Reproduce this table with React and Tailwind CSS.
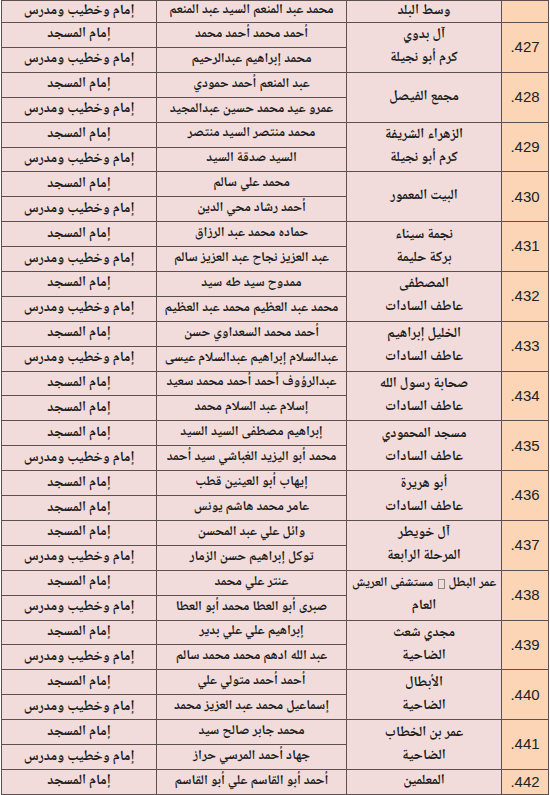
import React from 'react';

const IMAM = 'إمام المسجد';
const KHATIB = 'إمام وخطيب ومدرس';

// each record: number, mosque lines, two people [name, role]
const rows = [
  { no: '427', mosque: ['آل بدوي', 'كرم أبو نجيلة'], people: [['أحمد محمد أحمد محمد', IMAM], ['محمد إبراهيم عبدالرحيم', KHATIB]] },
  { no: '428', mosque: ['مجمع الفيصل'], people: [['عبد المنعم أحمد حمودي', IMAM], ['عمرو عيد محمد حسين عبدالمجيد', KHATIB]] },
  { no: '429', mosque: ['الزهراء الشريفة', 'كرم أبو نجيلة'], people: [['محمد منتصر السيد منتصر', IMAM], ['السيد صدقة السيد', KHATIB]] },
  { no: '430', mosque: ['البيت المعمور'], people: [['محمد علي سالم', IMAM], ['أحمد رشاد محي الدين', KHATIB]] },
  { no: '431', mosque: ['نجمة سيناء', 'بركة حليمة'], people: [['حماده محمد عبد الرزاق', IMAM], ['عبد العزيز نجاح عبد العزيز سالم', KHATIB]] },
  { no: '432', mosque: ['المصطفى', 'عاطف السادات'], people: [['ممدوح سيد طه سيد', IMAM], ['محمد عبد العظيم محمد عبد العظيم', KHATIB]] },
  { no: '433', mosque: ['الخليل إبراهيم', 'عاطف السادات'], people: [['أحمد محمد السعداوي حسن', IMAM], ['عبدالسلام إبراهيم عبدالسلام عيسى', KHATIB]] },
  { no: '434', mosque: ['صحابة رسول الله', 'عاطف السادات'], people: [['عبدالرؤوف أحمد أحمد محمد سعيد', IMAM], ['إسلام عبد السلام محمد', IMAM]] },
  { no: '435', mosque: ['مسجد المحمودي', 'عاطف السادات'], people: [['إبراهيم مصطفى السيد السيد', IMAM], ['محمد أبو اليزيد الغباشي سيد أحمد', KHATIB]] },
  { no: '436', mosque: ['أبو هريرة', 'عاطف السادات'], people: [['إيهاب أبو العينين قطب', IMAM], ['عامر محمد هاشم  يونس', IMAM]] },
  { no: '437', mosque: ['آل خويطر', 'المرحلة الرابعة'], people: [['وائل علي عبد المحسن', IMAM], ['توكل إبراهيم حسن الزمار', KHATIB]] },
  { no: '438', mosque: null, people: [['عنتر علي محمد', IMAM], ['صبرى أبو العطا محمد أبو العطا', KHATIB]] },
  { no: '439', mosque: ['مجدي شعث', 'الضاحية'], people: [['إبراهيم علي علي بدير', IMAM], ['عبد الله ادهم محمد محمد سالم', KHATIB]] },
  { no: '440', mosque: ['الأبطال', 'الضاحية'], people: [['أحمد أحمد متولي علي', IMAM], ['إسماعيل محمد عبد العزيز محمد', KHATIB]] },
  { no: '441', mosque: ['عمر بن الخطاب', 'الضاحية'], people: [['محمد جابر صالح سيد', IMAM], ['جهاد أحمد المرسي حراز', KHATIB]] },
];

const font = { fontFamily: '"Noto Naskh Arabic", "Noto Sans Arabic", "DejaVu Sans", sans-serif' };

const NumCell = ({ no }) => (
  <div className="w-[47px] shrink-0 bg-[#fbd5b5] border-l border-[#5e5050] flex items-center justify-center font-['Liberation_Sans',sans-serif] text-[15px] text-[#222]">
    {no ? `${no}.` : ''}
  </div>
);

const Record = ({ row }) => (
  <div className="flex h-[49.8px] border-b border-[#5e5050]">
    <NumCell no={row.no} />
    <div className="w-[155px] shrink-0 border-l border-[#5e5050] flex flex-col items-center justify-center text-[14px] font-bold leading-[23px]">
      {row.mosque ? (
        row.mosque.map((m) => <span key={m}>{m}</span>)
      ) : (
        <>
          <span className="flex items-center gap-1 whitespace-nowrap text-[13px]">
            <span>عمر البطل</span>
            <span className="inline-block w-[7px] h-[10px] border border-[#888]" />
            <span>مستشفى العريش</span>
          </span>
          <span>العام</span>
        </>
      )}
    </div>
    <div className="flex-1 flex flex-col">
      {row.people.map(([name, role], i) => (
        <div key={i} className={`flex-1 flex ${i === 0 ? 'border-b border-[#5e5050]' : ''}`}>
          <div className="w-[190px] shrink-0 border-l border-[#5e5050] flex items-center justify-center text-[13.5px] font-bold whitespace-nowrap">
            {name}
          </div>
          <div className="flex-1 flex items-center justify-center text-[14px] font-bold">{role}</div>
        </div>
      ))}
    </div>
  </div>
);

const Single = ({ no, mosque, name, role, h }) => (
  <div className={`flex border-b border-[#5e5050] ${h}`}>
    <NumCell no={no} />
    <div className="w-[155px] shrink-0 border-l border-[#5e5050] flex items-center justify-center text-[14px] font-bold">{mosque}</div>
    <div className="w-[190px] shrink-0 border-l border-[#5e5050] flex items-center justify-center text-[13.5px] font-bold whitespace-nowrap">{name}</div>
    <div className="flex-1 flex items-center justify-center text-[14px] font-bold">{role}</div>
  </div>
);

export default function App() {
  return (
    <div className="w-[550px] h-[795px] overflow-hidden bg-white">
      <div dir="rtl" style={font} className="ml-px w-[548px] border-t border-r border-l border-[#5e5050] bg-[#f2dcdb] text-[#1c1c1c]">
        <Single no="" mosque="وسط البلد" name="محمد عبد المنعم السيد عبد المنعم" role={KHATIB} h="h-[22px]" />
        {rows.map((r) => (
          <Record key={r.no} row={r} />
        ))}
        <Single no="442" mosque="المعلمين" name="أحمد أبو القاسم علي أبو القاسم" role={IMAM} h="h-[25px]" />
      </div>
    </div>
  );
}
